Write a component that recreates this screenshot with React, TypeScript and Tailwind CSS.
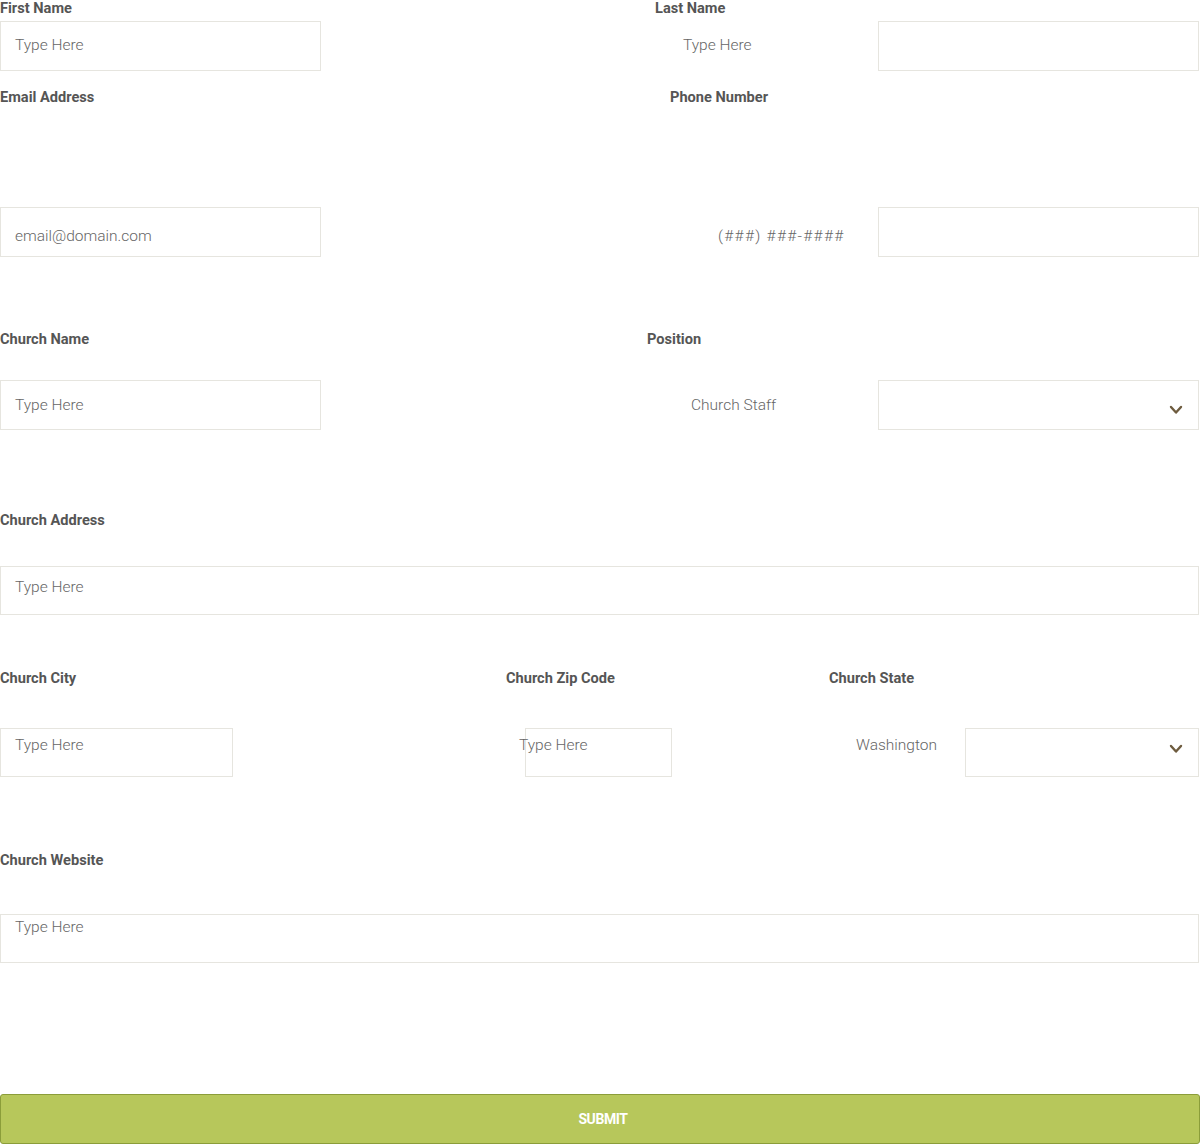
import React from "react";

const labelCls =
  "block text-[14.6px] leading-[16px] font-bold text-[#555555] whitespace-nowrap";
const phCls =
  "block text-[15.5px] leading-[16px] font-light text-[#666666] whitespace-nowrap";
const boxCls = "border border-[#e6e5df] bg-white h-[50px] shrink-0";
const box49 = "border border-[#e6e5df] bg-white h-[49px] shrink-0";

function Chevron() {
  return (
    <svg width="14" height="10" viewBox="0 0 14 10" className="block">
      <polyline
        points="2,2 7,7.5 12,2"
        fill="none"
        stroke="#6e5c3f"
        strokeWidth="2.4"
        strokeLinecap="round"
        strokeLinejoin="round"
      />
    </svg>
  );
}

export default function App() {
  return (
    <div
      className="w-[1200px] h-[1144px] bg-white"
      style={{ fontFamily: "Roboto, 'Liberation Sans', sans-serif" }}
    >
      {/* Row 1 */}
      <div className="flex h-[14px]">
        <div className="w-[655px] shrink-0">
          <span className={labelCls}>First Name</span>
        </div>
        <span className={labelCls}>Last Name</span>
      </div>
      <div className="flex items-start mt-[7px]">
        <div className={`${boxCls} w-[321px] pl-[14px] pt-[15px]`}>
          <span className={phCls}>Type Here</span>
        </div>
        <div className="w-[362px] shrink-0" />
        <span className={`${phCls} mt-[16px] w-[195px] shrink-0`}>Type Here</span>
        <div className={`${boxCls} w-[321px]`} />
      </div>

      {/* Row 2 */}
      <div className="flex h-[14px] mt-[18px]">
        <div className="w-[670px] shrink-0">
          <span className={labelCls}>Email Address</span>
        </div>
        <span className={labelCls}>Phone Number</span>
      </div>
      <div className="flex items-start mt-[104px]">
        <div className={`${boxCls} w-[321px] pl-[14px] pt-[20px]`}>
          <span className={phCls}>email@domain.com</span>
        </div>
        <div className="w-[397px] shrink-0" />
        <span className={`${phCls} mt-[21px] w-[160px] shrink-0 tracking-[1.3px]`}>(###) ###-####</span>
        <div className={`${boxCls} w-[321px]`} />
      </div>

      {/* Row 3 */}
      <div className="flex h-[14px] mt-[74px]">
        <div className="w-[647px] shrink-0">
          <span className={labelCls}>Church Name</span>
        </div>
        <span className={labelCls}>Position</span>
      </div>
      <div className="flex items-start mt-[35px]">
        <div className={`${boxCls} w-[321px] pl-[14px] pt-[16px]`}>
          <span className={phCls}>Type Here</span>
        </div>
        <div className="w-[370px] shrink-0" />
        <span className={`${phCls} mt-[17px] w-[187px] shrink-0`}>Church Staff</span>
        <div className={`${boxCls} w-[321px] flex items-center justify-end pr-[15px] pt-[10px]`}>
          <Chevron />
        </div>
      </div>

      {/* Row 4 */}
      <div className="flex h-[14px] mt-[82px]">
        <span className={labelCls}>Church Address</span>
      </div>
      <div className="flex items-start mt-[40px]">
        <div className={`${box49} w-[1199px] pl-[14px] pt-[12px]`}>
          <span className={phCls}>Type Here</span>
        </div>
      </div>

      {/* Row 5 */}
      <div className="flex h-[14px] mt-[55px]">
        <div className="w-[506px] shrink-0">
          <span className={labelCls}>Church City</span>
        </div>
        <div className="w-[323px] shrink-0">
          <span className={labelCls}>Church Zip Code</span>
        </div>
        <span className={labelCls}>Church State</span>
      </div>
      <div className="flex items-start mt-[44px]">
        <div className={`${box49} w-[233px] pl-[14px] pt-[8px]`}>
          <span className={phCls}>Type Here</span>
        </div>
        <div className="w-[292px] shrink-0" />
        <div className={`${box49} w-[147px] pt-[8px]`}>
          <span className={`${phCls} -ml-[7px]`}>Type Here</span>
        </div>
        <div className="w-[184px] shrink-0" />
        <span className={`${phCls} mt-[9px] w-[109px] shrink-0`}>Washington</span>
        <div className={`${box49} w-[234px] flex items-center justify-end pr-[15px] pb-[8px]`}>
          <Chevron />
        </div>
      </div>

      {/* Row 6 */}
      <div className="flex h-[14px] mt-[75px]">
        <span className={labelCls}>Church Website</span>
      </div>
      <div className="flex items-start mt-[48px]">
        <div className={`${box49} w-[1199px] pl-[14px] pt-[4px]`}>
          <span className={phCls}>Type Here</span>
        </div>
      </div>

      {/* Submit */}
      <div className="mt-[131px] w-[1200px]">
        <button
          type="button"
          className="w-full h-[50px] bg-[#b7c75b] border border-[#8b9d3a] rounded-[3px] text-white text-[14px] font-bold tracking-[-0.4px] flex items-center justify-center pl-[6px]"
        >
          SUBMIT
        </button>
      </div>
    </div>
  );
}
